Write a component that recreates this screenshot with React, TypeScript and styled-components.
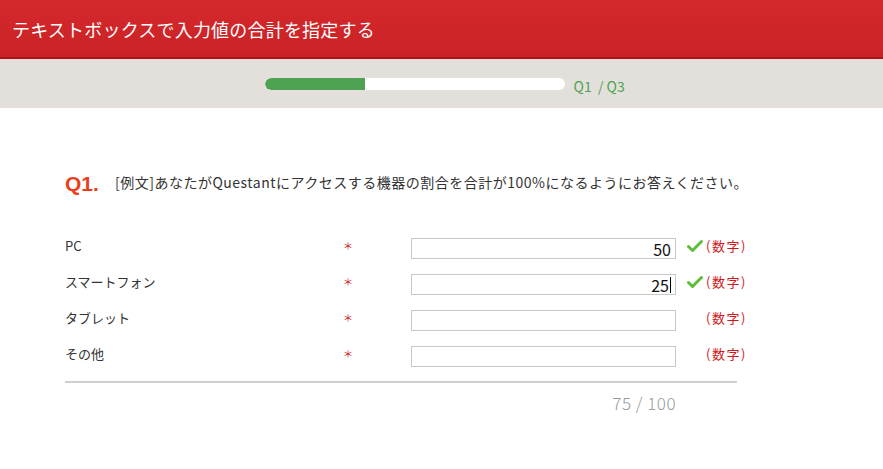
import { FC, Fragment } from 'react';
import styled, { createGlobalStyle } from 'styled-components';

const GlobalStyle = createGlobalStyle`
  html, body {
    margin: 0;
    padding: 0;
    background: #ffffff;
    font-family: "Noto Sans CJK JP", "Liberation Sans", sans-serif;
    color: #333;
  }
`;

interface Item {
  label: string;
  value: string;
  valid: boolean;
  focused?: boolean;
}

const items: Item[] = [
  { label: 'PC', value: '50', valid: true },
  { label: 'スマートフォン', value: '25', valid: true, focused: true },
  { label: 'タブレット', value: '', valid: false },
  { label: 'その他', value: '', valid: false },
];

const Header = styled.header`
  height: 57px;
  border-bottom: 2px solid #ae1218;
  background: linear-gradient(#d5292c, #c92226);
  display: flex;
  align-items: center;
  padding-left: 12px;
  box-shadow: 0 1px 1px rgba(0, 0, 0, 0.12);
`;

const Title = styled.h1`
  margin: 0;
  font-size: 18px;
  font-weight: 400;
  color: #fff;
  letter-spacing: 0.2px;
`;

const ProgressBand = styled.div`
  height: 49px;
  background: #e3e0dc;
  display: flex;
  align-items: center;
  justify-content: center;
  gap: 9px;
  padding-left: 12px;
`;

const Track = styled.div`
  width: 300px;
  height: 12px;
  border-radius: 6px;
  background: #fff;
  overflow: hidden;
`;

const Fill = styled.div`
  height: 100%;
  background: #4ea352;
  border-radius: 6px 0 0 6px;
`;

const ProgressLabel = styled.span`
  font-size: 14px;
  color: #4ea352;
  width: 57px;
  margin-top: 4px;
  white-space: pre;
`;

const Main = styled.main`
  padding: 60px 0 0 65px;
`;

const Question = styled.div`
  display: flex;
  align-items: center;
  gap: 11px;
  margin-bottom: 42px;
  white-space: nowrap;
`;

const QNumber = styled.span`
  font-family: "Liberation Sans", sans-serif;
  font-size: 21px;
  font-weight: 700;
  color: #e8401c;
  width: 39px;
  margin-top: 4px;
`;

const QText = styled.span`
  font-size: 14px;
  color: #333;
  letter-spacing: 0.5px;
`;

const Rows = styled.div`
  display: grid;
  grid-template-columns: 278px 68px 265px 11px 16px 3px max-content;
  row-gap: 15px;
  align-items: center;
`;

const Label = styled.span`
  font-size: 13px;
  line-height: 1;
  color: #333;
  margin-top: -6px;
`;

const Required = styled.span`
  font-size: 10px;
  line-height: 1;
  color: #d0191b;
  margin-top: -5px;
`;

const Field = styled.div`
  grid-column: 3;
  height: 21px;
  box-sizing: border-box;
  border: 1px solid #c8c8c8;
  display: flex;
  align-items: center;
  justify-content: flex-end;
  padding-right: 4px;
  font-size: 16px;
  color: #111;
  line-height: 1;
`;

const Caret = styled.span`
  display: inline-block;
  width: 1px;
  height: 16px;
  background: #000;
  margin-left: 1px;
`;

const CheckCell = styled.span`
  grid-column: 5;
  display: flex;
  align-items: center;
  margin-top: -6px;
`;

const Note = styled.span`
  grid-column: 7;
  font-size: 13px;
  letter-spacing: 1.5px;
  line-height: 1;
  color: #d0191b;
  margin-top: -6px;
`;

const Divider = styled.hr`
  width: 672px;
  margin: 14px 0 0;
  border: none;
  border-top: 2px solid #d0d0d0;
`;

const Total = styled.div`
  width: 611px;
  text-align: right;
  font-size: 17px;
  letter-spacing: 0.5px;
  color: #999;
  font-weight: 300;
  margin-top: 7px;
`;

const Check: FC = () => (
  <svg width="16" height="14" viewBox="0 0 16 14">
    <path d="M1.5 7.5 L5.5 11.5 L14.5 2.5" fill="none" stroke="#5cbf3a" strokeWidth="3" strokeLinecap="round" strokeLinejoin="round" />
  </svg>
);

const App: FC = () => {
  const total = items.reduce((sum, i) => sum + (Number(i.value) || 0), 0);
  return (
    <>
      <GlobalStyle />
      <Header>
        <Title>テキストボックスで入力値の合計を指定する</Title>
      </Header>
      <ProgressBand>
        <Track>
          <Fill style={{ width: `${100 / 3}%` }} />
        </Track>
        <ProgressLabel>Q1  / Q3</ProgressLabel>
      </ProgressBand>
      <Main>
        <Question>
          <QNumber>Q1.</QNumber>
          <QText>[例文]あなたがQuestantにアクセスする機器の割合を合計が100%になるようにお答えください。</QText>
        </Question>
        <Rows>
          {items.map((item) => (
            <Fragment key={item.label}>
              <Label>{item.label}</Label>
              <Required>＊</Required>
              <Field>
                {item.value}
                {item.focused && <Caret />}
              </Field>
              <CheckCell>{item.valid && <Check />}</CheckCell>
              <Note>(数字)</Note>
            </Fragment>
          ))}
        </Rows>
        <Divider />
        <Total>{total} / 100</Total>
      </Main>
    </>
  );
};

export default App;
